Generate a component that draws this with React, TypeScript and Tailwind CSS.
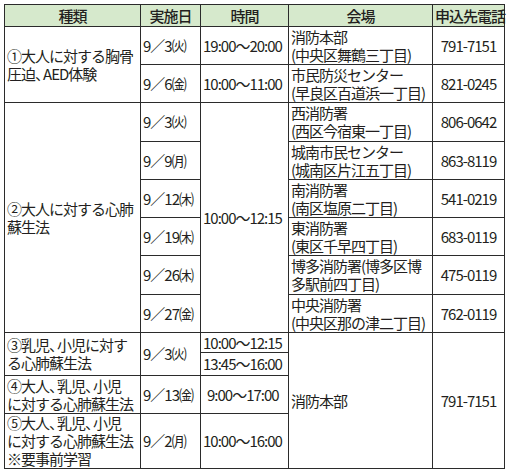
const FONT = "font-['Noto_Sans_CJK_JP',sans-serif]";

const cell = "border border-[#2b2b2b] px-[2px] py-0 align-middle whitespace-nowrap";

// narrow ideographic comma, as in the printed table
const C = () => <span className="tracking-[-7px]">、</span>;

export default function App() {
  return (
    <div className={`min-h-[471px] w-[511px] bg-white pl-[4px] pt-[4px] text-[15px] leading-[18px] tracking-[-1px] text-[#231f20] ${FONT}`}>
      <table className="w-[500px] table-fixed border-collapse">
        <colgroup>
          <col className="w-[136px]" />
          <col className="w-[60px]" />
          <col className="w-[88px]" />
          <col className="w-[144px]" />
          <col className="w-[72px]" />
        </colgroup>
        <thead>
          <tr className="h-[22px] bg-[#d6e9cc] text-[15px]">
            <th className={`${cell} text-center font-medium`}>種類</th>
            <th className={`${cell} text-center font-medium`}>実施日</th>
            <th className={`${cell} text-center font-medium`}>時間</th>
            <th className={`${cell} text-center font-medium`}>会場</th>
            <th className={`${cell} text-center font-medium`}>申込先電話</th>
          </tr>
        </thead>
        <tbody>
          {/* ① */}
          <tr className="h-[38px]">
            <td rowSpan={2} className={cell}>
              ①大人に対する胸骨
              <br />
              圧迫<C />AED体験
            </td>
            <td className={cell}>9／3㈫</td>
            <td className={cell}>19:00～20:00</td>
            <td className={cell}>
              消防本部
              <br />
              (中央区舞鶴三丁目)
            </td>
            <td className={`${cell} text-center`}>791-7151</td>
          </tr>
          <tr className="h-[38px]">
            <td className={cell}>9／6㈮</td>
            <td className={cell}>10:00～11:00</td>
            <td className={cell}>
              市民防災センター
              <br />
              (早良区百道浜一丁目)
            </td>
            <td className={`${cell} text-center`}>821-0245</td>
          </tr>

          {/* ② */}
          <tr className="h-[39px]">
            <td rowSpan={6} className={cell}>
              ②大人に対する心肺
              <br />
              蘇生法
            </td>
            <td className={cell}>9／3㈫</td>
            <td rowSpan={6} className={cell}>10:00～12:15</td>
            <td className={cell}>
              西消防署
              <br />
              (西区今宿東一丁目)
            </td>
            <td className={`${cell} text-center`}>806-0642</td>
          </tr>
          <tr className="h-[38px]">
            <td className={cell}>9／9㈪</td>
            <td className={cell}>
              城南市民センター
              <br />
              (城南区片江五丁目)
            </td>
            <td className={`${cell} text-center`}>863-8119</td>
          </tr>
          <tr className="h-[38px]">
            <td className={cell}>9／12㈭</td>
            <td className={cell}>
              南消防署
              <br />
              (南区塩原二丁目)
            </td>
            <td className={`${cell} text-center`}>541-0219</td>
          </tr>
          <tr className="h-[38px]">
            <td className={cell}>9／19㈭</td>
            <td className={cell}>
              東消防署
              <br />
              (東区千早四丁目)
            </td>
            <td className={`${cell} text-center`}>683-0119</td>
          </tr>
          <tr className="h-[39px]">
            <td className={cell}>9／26㈭</td>
            <td className={cell}>
              博多消防署(博多区博
              <br />
              多駅前四丁目)
            </td>
            <td className={`${cell} text-center`}>475-0119</td>
          </tr>
          <tr className="h-[38px]">
            <td className={cell}>9／27㈮</td>
            <td className={cell}>
              中央消防署
              <br />
              (中央区那の津二丁目)
            </td>
            <td className={`${cell} text-center`}>762-0119</td>
          </tr>

          {/* ③ */}
          <tr className="h-[20px]">
            <td rowSpan={2} className={cell}>
              ③乳児<C />小児に対す
              <br />
              る心肺蘇生法
            </td>
            <td rowSpan={2} className={cell}>9／3㈫</td>
            <td className={cell}>10:00～12:15</td>
            <td rowSpan={4} className={cell}>消防本部</td>
            <td rowSpan={4} className={`${cell} text-center`}>791-7151</td>
          </tr>
          <tr className="h-[23px]">
            <td className={cell}>13:45～16:00</td>
          </tr>

          {/* ④ */}
          <tr className="h-[38px]">
            <td className={cell}>
              ④大人<C />乳児<C />小児
              <br />
              に対する心肺蘇生法
            </td>
            <td className={cell}>9／13㈮</td>
            <td className={`${cell} pl-[6px]`}>9:00～17:00</td>
          </tr>

          {/* ⑤ */}
          <tr className="h-[55px]">
            <td className={cell}>
              ⑤大人<C />乳児<C />小児
              <br />
              に対する心肺蘇生法
              <br />
              ※要事前学習
            </td>
            <td className={cell}>9／2㈪</td>
            <td className={cell}>10:00～16:00</td>
          </tr>
        </tbody>
      </table>
    </div>
  );
}
